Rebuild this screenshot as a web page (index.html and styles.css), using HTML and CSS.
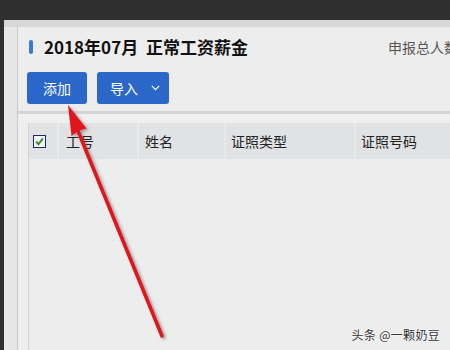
FILE: index.html
```html
<!DOCTYPE html>
<html lang="zh-CN">
<head>
<meta charset="utf-8">
<title>正常工资薪金</title>
<link rel="stylesheet" href="styles.css">
</head>
<body>
<div class="frame">
  <div class="side"></div>
  <div class="panel">
    <div class="titlebar">
      <span class="mark"></span>
      <h1 class="title">2018年07月&nbsp;&nbsp;正常工资薪金</h1>
      <span class="count">申报总人数</span>
    </div>
    <div class="toolbar">
      <button class="btn btn-add">添加</button>
      <button class="btn btn-import">导入<svg class="chev" width="9" height="6" viewBox="0 0 9 6"><path d="M0.8 0.8 L4.5 4.6 L8.2 0.8" fill="none" stroke="#fff" stroke-width="1.2"/></svg></button>
    </div>
    <div class="sep"></div>
    <div class="tablewrap">
      <div class="table">
        <div class="thead">
          <div class="cell c-check"><span class="checkbox"><svg width="11" height="11" viewBox="0 0 11 11"><path d="M2.2 5.6 L4.5 8.3 L8.8 2.4" fill="none" stroke="#2c8a25" stroke-width="1.8"/></svg></span></div>
          <div class="cell c-id">工号</div>
          <div class="cell c-name">姓名</div>
          <div class="cell c-type">证照类型</div>
          <div class="cell c-num">证照号码</div>
        </div>
        <div class="tbody"></div>
      </div>
    </div>
  </div>
</div>
<svg class="arrow" width="450" height="350" viewBox="0 0 450 350">
  <defs>
    <filter id="sh" x="-20%" y="-20%" width="140%" height="140%">
      <feDropShadow dx="2" dy="1.5" stdDeviation="1.6" flood-color="#555" flood-opacity="0.55"/>
    </filter>
  </defs>
  <g filter="url(#sh)">
    <line x1="162" y1="336" x2="78" y2="131" stroke="#e0121a" stroke-width="3.6" stroke-linecap="round"/>
    <path d="M68 105 L86.5 128.5 L79 130.5 L71.5 136 Z" fill="#e0121a"/>
  </g>
</svg>
<div class="watermark">头条 @一颗奶豆</div>
</body>
</html>
```

FILE: styles.css
```css
html, body {
  margin: 0;
  padding: 0;
}
body {
  width: 450px;
  height: 350px;
  overflow: hidden;
  background: #2f2f2f;
  font-family: "Noto Sans CJK SC", "Noto Sans", sans-serif;
  position: relative;
}
.frame {
  margin: 20px 0 0 4px;
  height: 323px;
  border-top: 7px solid #d7d7d7;
  display: flex;
  background: #ececec;
}
.side {
  width: 13px;
  flex: none;
  background: #e7e7e7;
  border-right: 1px solid #c9c9c9;
}
.panel {
  flex: 1;
  min-width: 0;
  overflow: hidden;
  background: #ededed;
  display: flex;
  flex-direction: column;
}
.titlebar {
  display: flex;
  align-items: center;
  height: 22px;
  padding: 9px 0 14px 11px;
}
.mark {
  width: 4px;
  height: 14px;
  border-radius: 2px;
  background: #3a77d6;
  flex: none;
}
.title {
  margin: 0 0 0 11px;
  font-size: 17px;
  font-weight: bold;
  color: #111;
  line-height: 22px;
  white-space: nowrap;
}
.count {
  margin-left: auto;
  width: 62px;
  flex: none;
  white-space: nowrap;
  font-size: 14px;
  color: #555;
  line-height: 22px;
}
.toolbar {
  display: flex;
  gap: 10px;
  padding-left: 9px;
  height: 32px;
}
.btn {
  height: 32px;
  border: none;
  border-radius: 3px;
  background: #2b67c9;
  color: #fff;
  font-family: "Noto Sans CJK SC", sans-serif;
  font-size: 14px;
  padding: 0;
  display: flex;
  align-items: center;
  justify-content: center;
}
.btn-add {
  width: 60px;
}
.btn-import {
  width: 72px;
  justify-content: flex-start;
  padding-left: 13px;
}
.chev {
  margin-left: 13px;
}
.sep {
  margin-top: 7px;
  height: 3px;
  background: #d5d5d5;
  flex: none;
}
.tablewrap {
  flex: 1;
  background: linear-gradient(#f1f1f1, #eeeeee 9px);
  padding: 9px 0 0 10px;
}
.table {
  height: 100%;
  border-left: 1px solid #d3d3d3;
  background: #ededed;
}
.thead {
  display: flex;
  height: 36px;
  background: #e1e2e4;
  white-space: nowrap;
}
.cell {
  display: flex;
  align-items: center;
  font-size: 14px;
  color: #222;
  padding-left: 6px;
  border-right: 2px solid #e8e9eb;
  flex: none;
  box-sizing: border-box;
}
.c-check {
  width: 30px;
  padding-left: 4px;
}
.c-id {
  width: 80px;
  padding-left: 7px;
}
.c-name {
  width: 87px;
}
.c-type {
  width: 130px;
  padding-left: 5px;
}
.c-num {
  width: 120px;
  padding-left: 5px;
}
.checkbox {
  width: 11px;
  height: 11px;
  border: 1px solid #1c2870;
  background: #f3f3f3;
  display: flex;
}
.arrow {
  position: absolute;
  left: 0;
  top: 0;
  pointer-events: none;
}
.watermark {
  position: absolute;
  right: 10px;
  bottom: 7px;
  font-size: 12px;
  letter-spacing: 0.3px;
  color: #333;
  line-height: 16px;
  text-shadow: 0 0 2px #fff, 0 0 2px #fff;
}
```
